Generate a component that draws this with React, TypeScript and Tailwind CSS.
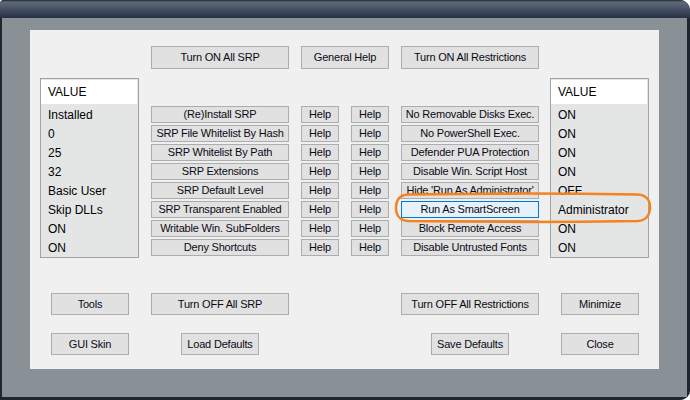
import React from "react";

const font = "font-['Liberation_Sans',Arial,sans-serif]";

function Btn({ cls, children, selected }: { cls: string; children: React.ReactNode; selected?: boolean }) {
  return (
    <div
      className={`${cls} flex items-center justify-center shrink-0 border text-[11px] tracking-[-0.2px] text-[#0a0a14] whitespace-nowrap overflow-hidden ${
        selected ? "border-[#0078d7] bg-[#e5f1fb]" : "border-[#adadad] bg-[#e1e1e1]"
      }`}
    >
      {children}
    </div>
  );
}

function ValueList({ items }: { items: string[] }) {
  return (
    <div className="w-[99px] h-[180px] shrink-0 border border-[#a3a3a3] bg-[#e4e6e6] pt-[1px]">
      <div className="w-[96px] h-[24px] bg-white flex items-center pl-[7px] text-[12px] text-black">VALUE</div>
      <div className="mt-[1px] flex flex-col">
        {items.map((t, i) => (
          <div key={i} className="h-[19px] flex items-center pl-[7px] text-[12px] text-black whitespace-nowrap">
            {t}
          </div>
        ))}
      </div>
    </div>
  );
}

const rows: [string, string, boolean?][] = [
  ["(Re)Install SRP", "No Removable Disks Exec."],
  ["SRP File Whitelist By Hash", "No PowerShell Exec."],
  ["SRP Whitelist By Path", "Defender PUA Protection"],
  ["SRP Extensions", "Disable Win. Script Host"],
  ["SRP Default Level", "Hide  'Run As Administrator'"],
  ["SRP Transparent Enabled", "Run As SmartScreen", true],
  ["Writable Win. SubFolders", "Block Remote Access"],
  ["Deny Shortcuts", "Disable Untrusted Fonts"],
];

export default function App() {
  return (
    <div className={`${font} w-[690px] h-[400px] flex flex-col overflow-hidden rounded-tl-[4px] rounded-tr-[10px] rounded-br-[10px] bg-[#1f2630]`}>
      <div className="h-[18px] shrink-0 bg-[linear-gradient(to_bottom,#22262d_0px,#5e6a7a_2px,#4a5569_8px,#2a3447_17px)]" />
      <div className="flex-1 border-l-2 border-r-[3px] border-b-[3px] border-[#1f2630] bg-[#899096]">
        <div className="relative ml-[28px] mt-[12px] w-[629px] h-[339px] bg-[#f0f0f0] pt-[16px]">
          {/* top row */}
          <div className="flex h-[23px] pl-[121px] gap-[12px]">
            <Btn cls="w-[138px] h-[23px]">Turn ON All SRP</Btn>
            <Btn cls="w-[88px] h-[23px]">General Help</Btn>
            <Btn cls="w-[138px] h-[23px]">Turn ON All Restrictions</Btn>
          </div>

          {/* middle */}
          <div className="mt-[9px] flex pl-[10px]">
            <ValueList items={["Installed", "0", "25", "32", "Basic User", "Skip DLLs", "ON", "ON"]} />
            <div className="ml-[12px] pt-[28px] w-[388px] flex flex-col gap-[2px]">
              {rows.map(([a, b, sel], i) => (
                <div key={i} className="flex gap-[12px] h-[17px]">
                  <Btn cls="w-[138px] h-[17px]">{a}</Btn>
                  <Btn cls="w-[38px] h-[17px]">Help</Btn>
                  <Btn cls="w-[38px] h-[17px]">Help</Btn>
                  <Btn cls="w-[138px] h-[17px]" selected={sel}>
                    {b}
                  </Btn>
                </div>
              ))}
            </div>
            <div className="ml-[11px]">
              <ValueList items={["ON", "ON", "ON", "ON", "OFF", "Administrator", "ON", "ON"]} />
            </div>
          </div>

          {/* bottom row 1 */}
          <div className="mt-[35px] flex h-[22px]">
            <div className="ml-[21px]"><Btn cls="w-[78px] h-[22px]">Tools</Btn></div>
            <div className="ml-[22px]"><Btn cls="w-[138px] h-[22px]">Turn OFF All SRP</Btn></div>
            <div className="ml-[112px]"><Btn cls="w-[138px] h-[22px]">Turn OFF All Restrictions</Btn></div>
            <div className="ml-[22px]"><Btn cls="w-[78px] h-[22px]">Minimize</Btn></div>
          </div>

          {/* bottom row 2 */}
          <div className="mt-[18px] flex h-[22px]">
            <div className="ml-[21px]"><Btn cls="w-[78px] h-[22px]">GUI Skin</Btn></div>
            <div className="ml-[52px]"><Btn cls="w-[78px] h-[22px]">Load Defaults</Btn></div>
            <div className="ml-[172px]"><Btn cls="w-[78px] h-[22px]">Save Defaults</Btn></div>
            <div className="ml-[52px]"><Btn cls="w-[78px] h-[22px]">Close</Btn></div>
          </div>

          {/* orange highlight */}
          <svg className="absolute left-[364px] top-[162px] pointer-events-none" width="258" height="32" viewBox="0 0 258 32">
            <path
              d="M14 2.5 C 80 1.5, 180 1.5, 244 2.5 C 252 3, 256 8, 256 15 C 256 23, 252 28.5, 244 29 C 180 30, 80 30, 14 29 C 6 28.5, 2 23, 2 16 C 2 8, 6 3, 14 2.5 Z"
              fill="none"
              stroke="#f5821f"
              strokeWidth="2.5"
            />
          </svg>
        </div>
      </div>
    </div>
  );
}
